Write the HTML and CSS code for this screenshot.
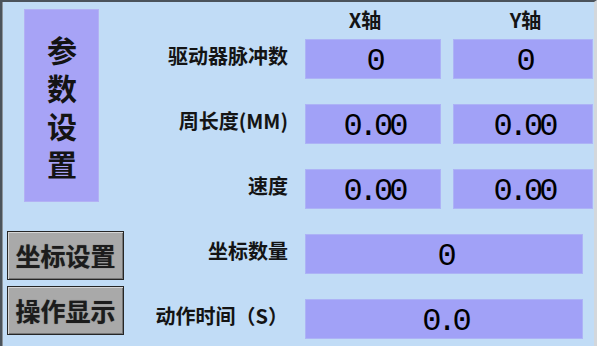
FILE: index.html
```html
<!DOCTYPE html>
<html lang="zh-CN">
  <head>
    <meta charset="UTF-8" />
    <meta name="viewport" content="width=device-width, initial-scale=1.0" />
    <title>参数设置</title>
    <link rel="stylesheet" href="styles.css">
  </head>
  <body>
    <main class="screen">
      <aside class="side">
        <div class="side-title">
          <span>参</span>
          <span>数</span>
          <span>设</span>
          <span>置</span>
        </div>
        <div class="side-buttons">
          <button class="btn">坐标设置</button>
          <button class="btn">操作显示</button>
        </div>
      </aside>
      <section class="params">
        <div class="axis-head">
          <span></span>
          <span class="axis axis-x">X轴</span>
          <span class="axis">Y轴</span>
        </div>
        <div class="grid">
          <label class="label">驱动器脉冲数</label>
          <div class="value">0</div>
          <div class="value">0</div>

          <label class="label">周长度(MM)</label>
          <div class="value">0.00</div>
          <div class="value">0.00</div>

          <label class="label">速度</label>
          <div class="value">0.00</div>
          <div class="value">0.00</div>

          <label class="label">坐标数量</label>
          <div class="value wide">0</div>

          <label class="label">动作时间（S）</label>
          <div class="value wide">0.0</div>
        </div>
      </section>
    </main>
  </body>
</html>
```

FILE: styles.css
```css
* {
  box-sizing: border-box;
  margin: 0;
  padding: 0;
}
:root {
  --bg: #c1dcf6;
  --box: #a1a1f7;
  --box-edge: #adb3f6;
  --panel: #a7a3f6;
  --frame: #4b535b;
  --text: #141414;
}
body {
  background: var(--bg);
  color: var(--text);
  font-family: "Noto Sans CJK SC", "DejaVu Sans", sans-serif;
  width: 597px;
  height: 346px;
  overflow: hidden;
}
.screen {
  display: flex;
  width: 597px;
  height: 346px;
  border-top: 2px solid var(--frame);
  border-left: 2px solid var(--frame);
  border-right: 3px solid #d3d7db;
  box-shadow: inset 1px 0 #8d959d;
}
/* left column */
.side {
  width: 128px;
  display: flex;
  flex-direction: column;
  padding-top: 7px;
}
.side-title {
  margin-left: 22px;
  width: 75px;
  height: 193px;
  background: var(--panel);
  border: 1px solid #b3b1f4;
  display: flex;
  flex-direction: column;
  align-items: center;
  justify-content: center;
  font-size: 30px;
  font-weight: bold;
  padding-left: 1px;
}
.side-title span {
  display: block;
  height: 38px;
  line-height: 38px;
}
.side-buttons {
  margin-top: 29px;
  margin-left: 5px;
  display: flex;
  flex-direction: column;
  gap: 6px;
}
.btn {
  width: 117px;
  height: 49px;
  background: #a9a9a9;
  border: 1px solid #262626;
  box-shadow: inset 1px 1px #d6d6d6, inset -1px -1px #767676;
  font-family: inherit;
  font-size: 25px;
  font-weight: bold;
  color: #1c1c1c;
  text-shadow: 0 0 1px #555;
  line-height: 1;
  cursor: pointer;
}
/* right area */
.params {
  flex: 1;
}
.axis-head,
.grid {
  display: grid;
  grid-template-columns: 158px 136px 135px;
  column-gap: 17px;
}
.axis-head {
  margin-top: 5px;
  height: 26px;
  font-size: 20px;
  font-weight: bold;
  line-height: 26px;
}
.axis {
  text-align: center;
}
.axis-x {
  padding-right: 16px;
}
.grid {
  margin-top: 6px;
  grid-template-rows: repeat(5, 40px);
  row-gap: 25px;
}
.grid .value:nth-child(3n) {
  margin-left: -5px;
}
.label {
  align-self: center;
  text-align: right;
  font-size: 20px;
  font-weight: bold;
  line-height: 26px;
  margin-bottom: 6px;
  white-space: nowrap;
}
.value {
  background: var(--box);
  border: 1px solid var(--box-edge);
  display: flex;
  align-items: center;
  justify-content: center;
  padding: 5px 0 0 2px;
  font-family: "Liberation Mono", monospace;
  font-size: 32px;
  letter-spacing: -4px;
  color: #000;
}
.value.wide {
  grid-column: 2 / 4;
  width: 278px;
}
```
